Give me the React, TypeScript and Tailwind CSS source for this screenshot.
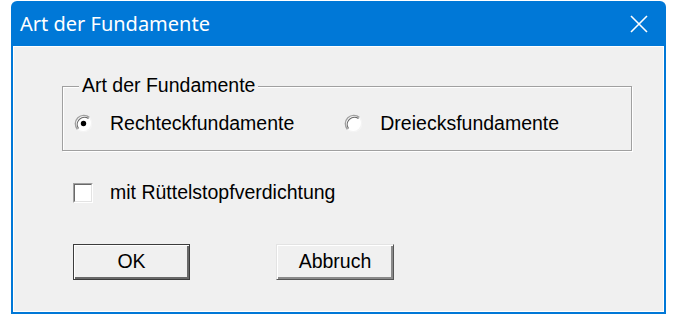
import React from 'react';

const sans = "font-['Liberation_Sans',Arial,sans-serif]";

function Radio({ checked }: { checked?: boolean }) {
  return (
    <svg width="19" height="19" viewBox="0 0 19 19" className="shrink-0">
      <circle cx="9.5" cy="9.5" r="8.5" fill="#fff" />
      <path d="M3.5 15.5 A8.5 8.5 0 0 1 15.5 3.5" fill="none" stroke="#a0a0a0" strokeWidth="1.4" />
      <path d="M4.5 14.5 A7.2 7.2 0 0 1 14.5 4.5" fill="none" stroke="#696969" strokeWidth="1.2" />
      <path d="M15.5 3.5 A8.5 8.5 0 0 1 3.5 15.5" fill="none" stroke="#f4f4f4" strokeWidth="1.4" />
      {checked && <circle cx="9.5" cy="9.5" r="2.7" fill="#000" />}
    </svg>
  );
}

function Checkbox() {
  return (
    <div className="h-[20px] w-[20px] shrink-0 border border-t-[#a0a0a0] border-l-[#a0a0a0] border-r-white border-b-white">
      <div className="h-full w-full border border-t-[#696969] border-l-[#696969] border-r-[#e3e3e3] border-b-[#e3e3e3] bg-white" />
    </div>
  );
}

export default function App() {
  return (
    <div className="h-[325px] w-[685px] bg-white pl-[11px] pt-[1px]">
      <div className="flex h-[313px] w-[655px] flex-col rounded-t-[6px] bg-[#0078d7] px-[2px] pb-[2px]">
        <div className="flex h-[45px] shrink-0 items-center justify-between pl-[7px] pr-[16px]">
          <span className="pt-[1px] font-['Noto_Sans',sans-serif] text-[20px] leading-none text-white">
            Art der Fundamente
          </span>
          <svg width="18" height="18" viewBox="0 0 18 18">
            <path d="M1 1 L17 17 M17 1 L1 17" stroke="#fff" strokeWidth="1.6" />
          </svg>
        </div>
        <div className={`flex-1 border border-white bg-[#f0f0f0] text-[19.5px] leading-none text-black ${sans}`}>
          <div className="relative ml-[48px] mt-[39px] h-[65px] w-[570px] border border-[#a0a0a0] shadow-[inset_1px_1px_0_#fff,1px_1px_0_#fff]">
            <span className="absolute left-[16px] top-[-11px] bg-[#f0f0f0] px-[3px]">Art der Fundamente</span>
            <div className="flex items-center pl-[11px] pt-[27px]">
              <Radio checked />
              <span className="ml-[17px]">Rechteckfundamente</span>
              <div className="ml-[50px]">
                <Radio />
              </div>
              <span className="ml-[17px]">Dreiecksfundamente</span>
            </div>
          </div>
          <div className="ml-[59px] mt-[32px] flex items-center">
            <Checkbox />
            <span className="ml-[17px]">mit Rüttelstopfverdichtung</span>
          </div>
          <div className="ml-[59px] mt-[41px] flex gap-[86px]">
            <button className="flex h-[36px] w-[117px] items-center justify-center border border-[#3c3c3c] bg-[#f0f0f0] shadow-[inset_1px_1px_0_#fff,inset_-2px_-2px_0_#696969]">
              OK
            </button>
            <button className="flex h-[36px] w-[118px] items-center justify-center border border-t-[#e3e3e3] border-l-[#e3e3e3] border-r-[#555] border-b-[#555] bg-[#f0f0f0] shadow-[inset_1px_1px_0_#fff,inset_-2px_-2px_0_#8a8a8a]">
              Abbruch
            </button>
          </div>
        </div>
      </div>
    </div>
  );
}
